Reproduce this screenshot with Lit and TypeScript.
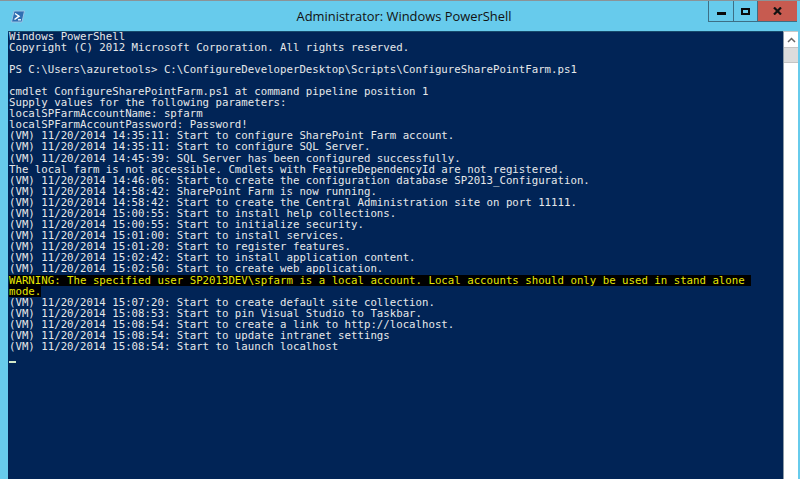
import { LitElement, html, css } from "lit";
import { customElement } from "lit/decorators.js";

const LINES = [
  "Windows PowerShell",
  "Copyright (C) 2012 Microsoft Corporation. All rights reserved.",
  "",
  "PS C:\\Users\\azuretools> C:\\ConfigureDeveloperDesktop\\Scripts\\ConfigureSharePointFarm.ps1",
  "",
  "cmdlet ConfigureSharePointFarm.ps1 at command pipeline position 1",
  "Supply values for the following parameters:",
  "localSPFarmAccountName: spfarm",
  "localSPFarmAccountPassword: Password!",
  "(VM) 11/20/2014 14:35:11: Start to configure SharePoint Farm account.",
  "(VM) 11/20/2014 14:35:11: Start to configure SQL Server.",
  "(VM) 11/20/2014 14:45:39: SQL Server has been configured successfully.",
  "The local farm is not accessible. Cmdlets with FeatureDependencyId are not registered.",
  "(VM) 11/20/2014 14:46:06: Start to create the configuration database SP2013_Configuration.",
  "(VM) 11/20/2014 14:58:42: SharePoint Farm is now running.",
  "(VM) 11/20/2014 14:58:42: Start to create the Central Administration site on port 11111.",
  "(VM) 11/20/2014 15:00:55: Start to install help collections.",
  "(VM) 11/20/2014 15:00:55: Start to initialize security.",
  "(VM) 11/20/2014 15:01:00: Start to install services.",
  "(VM) 11/20/2014 15:01:20: Start to register features.",
  "(VM) 11/20/2014 15:02:42: Start to install application content.",
  "(VM) 11/20/2014 15:02:50: Start to create web application.",
];
const WARN = [
  "WARNING: The specified user SP2013DEV\\spfarm is a local account. Local accounts should only be used in stand alone ",
  "mode.",
];
const AFTER = [
  "(VM) 11/20/2014 15:07:20: Start to create default site collection.",
  "(VM) 11/20/2014 15:08:53: Start to pin Visual Studio to Taskbar.",
  "(VM) 11/20/2014 15:08:54: Start to create a link to http://localhost.",
  "(VM) 11/20/2014 15:08:54: Start to update intranet settings",
  "(VM) 11/20/2014 15:08:54: Start to launch localhost",
];

@customElement("app-root")
export class AppRoot extends LitElement {
  static styles = css`
    :host { display: flex; flex-direction: column; width: 800px; height: 479px; overflow: hidden; background: #67cbec; }
    .topline { height: 1px; background: #8b9397; flex: none; }
    .titlebar { height: 30px; flex: none; display: flex; align-items: flex-start; position: relative; }
    .icon { margin: 9px 0 0 11px; width: 14px; height: 13px; display: block; }
    .title { position: absolute; left: 8px; right: 0; top: 6px; text-align: center; font: 12.9px/18px "Open Sans", sans-serif; color: #111; }
    .buttons { margin-left: auto; margin-right: 3px; display: flex; height: 20px; border-left: 1px solid #3d6f85; border-bottom: 1px solid #3d6f85; }
    .btn { box-sizing: border-box; width: 25px; display: flex; align-items: center; justify-content: center; border-right: 1px solid #3d6f85; }
    .btn.restore { width: 24px; }
    .btn.close { width: 39px; background: #c75b50; border-right: none; }
    .btn svg { display: block; }
    .min-glyph { margin-top: 5px; }
    .body { flex: 1; display: flex; min-height: 0; padding-left: 8px; }
    .console { flex: 1; background: #012456; padding: 0 0 0 1px; color: #e6e8ea; font: 10.73px/11.1px "DejaVu Sans Mono", monospace; min-width: 0; border-top: 1px solid #16496b; }
    .lines { margin-top: -1.5px; }
    .line { height: 11.1px; white-space: pre; }
    .warn { display: inline-block; height: 11.1px; vertical-align: top; color: #e6e600; background: #000; }
    .line.cur { display: flex; align-items: flex-end; }
    .cursor { width: 7px; height: 2px; background: #d3e8c8; }
    .scroll { width: 14px; flex: none; background: #fff; border-left: 1px solid #8b9aa6; display: flex; flex-direction: column; border-top: 1px solid #c8c8c8; }
    .sbtn { height: 15px; display: flex; align-items: center; justify-content: center; }
    .thumb { height: 14px; background: #dcdcdc; border-top: 1px solid #c4c4c4; border-bottom: 1px solid #c4c4c4; }
    .edge { width: 2px; flex: none; }
  `;
  private row(t: string) {
    return html`<div class="line">${t}</div>`;
  }
  render() {
    return html`
      <div class="topline"></div>
      <div class="titlebar">
        <svg class="icon" viewBox="0 0 14 13" aria-hidden="true">
          <path d="M3 1 H13.5 L11 12 H0.5 Z" fill="#2f6fb2" stroke="#9cc4e4" stroke-width="1" />
          <path d="M4 3.5 L8 6.2 L3.5 9.5" fill="none" stroke="#fff" stroke-width="1.5" />
          <path d="M7 9.8 H10" stroke="#fff" stroke-width="1.3" />
        </svg>
        <div class="title">Administrator: Windows PowerShell</div>
        <div class="buttons">
          <div class="btn">
            <svg class="min-glyph" width="9" height="3" viewBox="0 0 9 3"><rect width="9" height="3" fill="#0a0a0a" /></svg>
          </div>
          <div class="btn restore">
            <svg width="9" height="7" viewBox="0 0 9 7"><rect x="1" y="1" width="7" height="5" fill="none" stroke="#0a0a0a" stroke-width="2" /></svg>
          </div>
          <div class="btn close">
            <svg width="9" height="8" viewBox="0 0 9 8"><path d="M1 0.5 L8 7.5 M8 0.5 L1 7.5" stroke="#111" stroke-width="2.2" /></svg>
          </div>
        </div>
      </div>
      <div class="body">
        <div class="console">
          <div class="lines">
            ${LINES.map((l) => this.row(l))}
            ${WARN.map((l) => html`<div class="line"><span class="warn">${l}</span></div>`)}
            ${AFTER.map((l) => this.row(l))}
            <div class="line cur"><div class="cursor"></div></div>
          </div>
        </div>
        <div class="scroll">
          <div class="sbtn">
            <svg width="9" height="6" viewBox="0 0 9 6"><path d="M1 5 L4.5 1.5 L8 5" fill="none" stroke="#666" stroke-width="1.5" /></svg>
          </div>
          <div class="thumb"></div>
        </div>
        <div class="edge"></div>
      </div>
    `;
  }
}
